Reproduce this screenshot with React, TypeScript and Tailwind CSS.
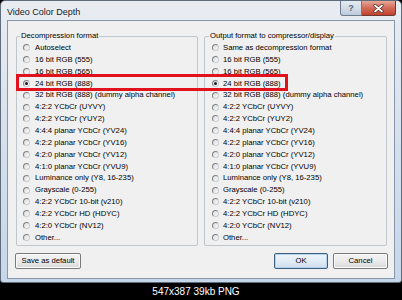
const FORMATS = [
  '16 bit RGB (555)',
  '16 bit RGB (565)',
  '24 bit RGB (888)',
  '32 bit RGB (888) (dummy alpha channel)',
  '4:2:2 YCbCr (UYVY)',
  '4:2:2 YCbCr (YUY2)',
  '4:4:4 planar YCbCr (YV24)',
  '4:2:2 planar YCbCr (YV16)',
  '4:2:0 planar YCbCr (YV12)',
  '4:1:0 planar YCbCr (YVU9)',
  'Luminance only (Y8, 16-235)',
  'Grayscale (0-255)',
  '4:2:2 YCbCr 10-bit (v210)',
  '4:2:2 YCbCr HD (HDYC)',
  '4:2:0 YCbCr (NV12)',
  'Other...',
]

function Radio({ checked }: { checked: boolean }) {
  return (
    <span className="flex h-[7px] w-[7px] shrink-0 items-center justify-center rounded-full border border-[#7f8286] border-r-[#c9ccd0] border-b-[#c9ccd0] bg-gradient-to-br from-[#d9dbdd] to-[#fbfbfb]">
      {checked && <span className="h-[3px] w-[3px] rounded-full bg-[#1b1e22]" />}
    </span>
  )
}

interface GroupProps {
  title: string
  items: string[]
  selected: number
  width: string
  legendInset: string
  rowInset: string
  gap: string
}

function Group({ title, items, selected, width, legendInset, rowInset, gap }: GroupProps) {
  return (
    <fieldset className={`${width} h-[215px] rounded-[2px] border border-[#bfc6cc]`}>
      <legend className={`${legendInset} px-[1px] text-[7.7px] leading-[10px] text-black`}>{title}</legend>
      <div className="flex flex-col pt-[1px]">
        {items.map((label, i) => (
          <div key={label} className={`flex h-[11.85px] items-center ${rowInset} ${gap}`}>
            <Radio checked={i === selected} />
            <span className="whitespace-nowrap text-[7.7px] leading-none text-black">{label}</span>
          </div>
        ))}
      </div>
    </fieldset>
  )
}

function Button({ label, primary = false, width }: { label: string; primary?: boolean; width: string }) {
  return (
    <button
      className={`${width} h-[16px] rounded-[2px] border text-[7.7px] leading-none text-black ${
        primary
          ? 'border-[#3d5f80] bg-gradient-to-b from-[#eef5fb] via-[#e1ecf6] to-[#cfdeec] shadow-[inset_0_0_0_1px_#b6d2ea]'
          : 'border-[#7a7a7a] bg-gradient-to-b from-[#f3f3f3] via-[#ebebeb] to-[#d9d9d9] shadow-[inset_0_0_0_1px_#fbfbfb]'
      }`}
    >
      {label}
    </button>
  )
}

export default function App() {
  return (
    <div className="flex h-[300px] w-[402px] flex-col bg-black font-['Liberation_Sans',Arial,sans-serif] text-[#111]">
      {/* Window frame */}
      <div className="relative flex h-[283px] flex-col rounded-t-[5px] rounded-b-[3px] border border-[#5f6c7b] bg-gradient-to-b from-[#e9edf2] via-[#d5e0ed] to-[#c6d7ea] px-[6px]">
        {/* Title bar */}
        <div className="flex h-[19px] items-center pt-[4px]">
          <span className="text-[9px] leading-none text-[#1a1a1a]">Video Color Depth</span>
        </div>

        {/* Caption buttons */}
        <div className="absolute top-0 right-[5px] flex">
          <div className="flex h-[15px] w-[22px] items-center justify-center rounded-bl-[3px] border border-t-0 border-[#6d7b8c] bg-gradient-to-b from-[#e4ebf3] via-[#d3dde8] to-[#bccbdc]">
            <span className="text-[9px] font-bold leading-none text-[#566473]">?</span>
          </div>
          <div className="flex h-[15px] w-[34px] items-center justify-center rounded-br-[3px] border border-t-0 border-l-0 border-[#6b3a36] bg-gradient-to-b from-[#e6a798] via-[#d26a58] to-[#c1402c]">
            <svg width="11" height="9" viewBox="0 0 11 9">
              <path d="M2 1.5 L9 7.5 M9 1.5 L2 7.5" stroke="#4b2a26" strokeWidth="3.2" strokeLinecap="round" />
              <path d="M2 1.5 L9 7.5 M9 1.5 L2 7.5" stroke="#ffffff" strokeWidth="1.7" strokeLinecap="round" />
            </svg>
          </div>
        </div>

        {/* Client area */}
        <div className="mb-[3px] flex flex-1 flex-col border border-[#8797ab] bg-[#f0f0f0]">
          <div className="flex gap-[6px] pt-[10px] pl-[8px]">
            <Group
              title="Decompression format"
              items={['Autoselect', ...FORMATS]}
              selected={3}
              width="w-[182px]"
              legendInset="ml-[3px]"
              rowInset="pl-[6px]"
              gap="gap-[5px]"
            />
            <Group
              title="Output format to compressor/display"
              items={['Same as decompression format', ...FORMATS]}
              selected={3}
              width="w-[183px]"
              legendInset="ml-[4px]"
              rowInset="pl-[7px]"
              gap="gap-[4px]"
            />
          </div>

          <div className="mt-[7px] flex items-center pr-[6px] pl-[7px]">
            <Button label="Save as default" width="w-[66px]" />
            <div className="ml-auto flex gap-[5px]">
              <Button label="OK" primary width="w-[54px]" />
              <Button label="Cancel" width="w-[55px]" />
            </div>
          </div>
        </div>

        {/* Red highlight annotation */}
        <div className="pointer-events-none absolute top-[73px] left-[15px] h-[17px] w-[272px] border-[3px] border-[#e2121d]" />
      </div>

      {/* Thumbnail caption */}
      <div className="flex flex-1 items-center justify-center pr-[10px]">
        <span className="text-[10px] leading-none text-white">547x387 39kb PNG</span>
      </div>
    </div>
  )
}
